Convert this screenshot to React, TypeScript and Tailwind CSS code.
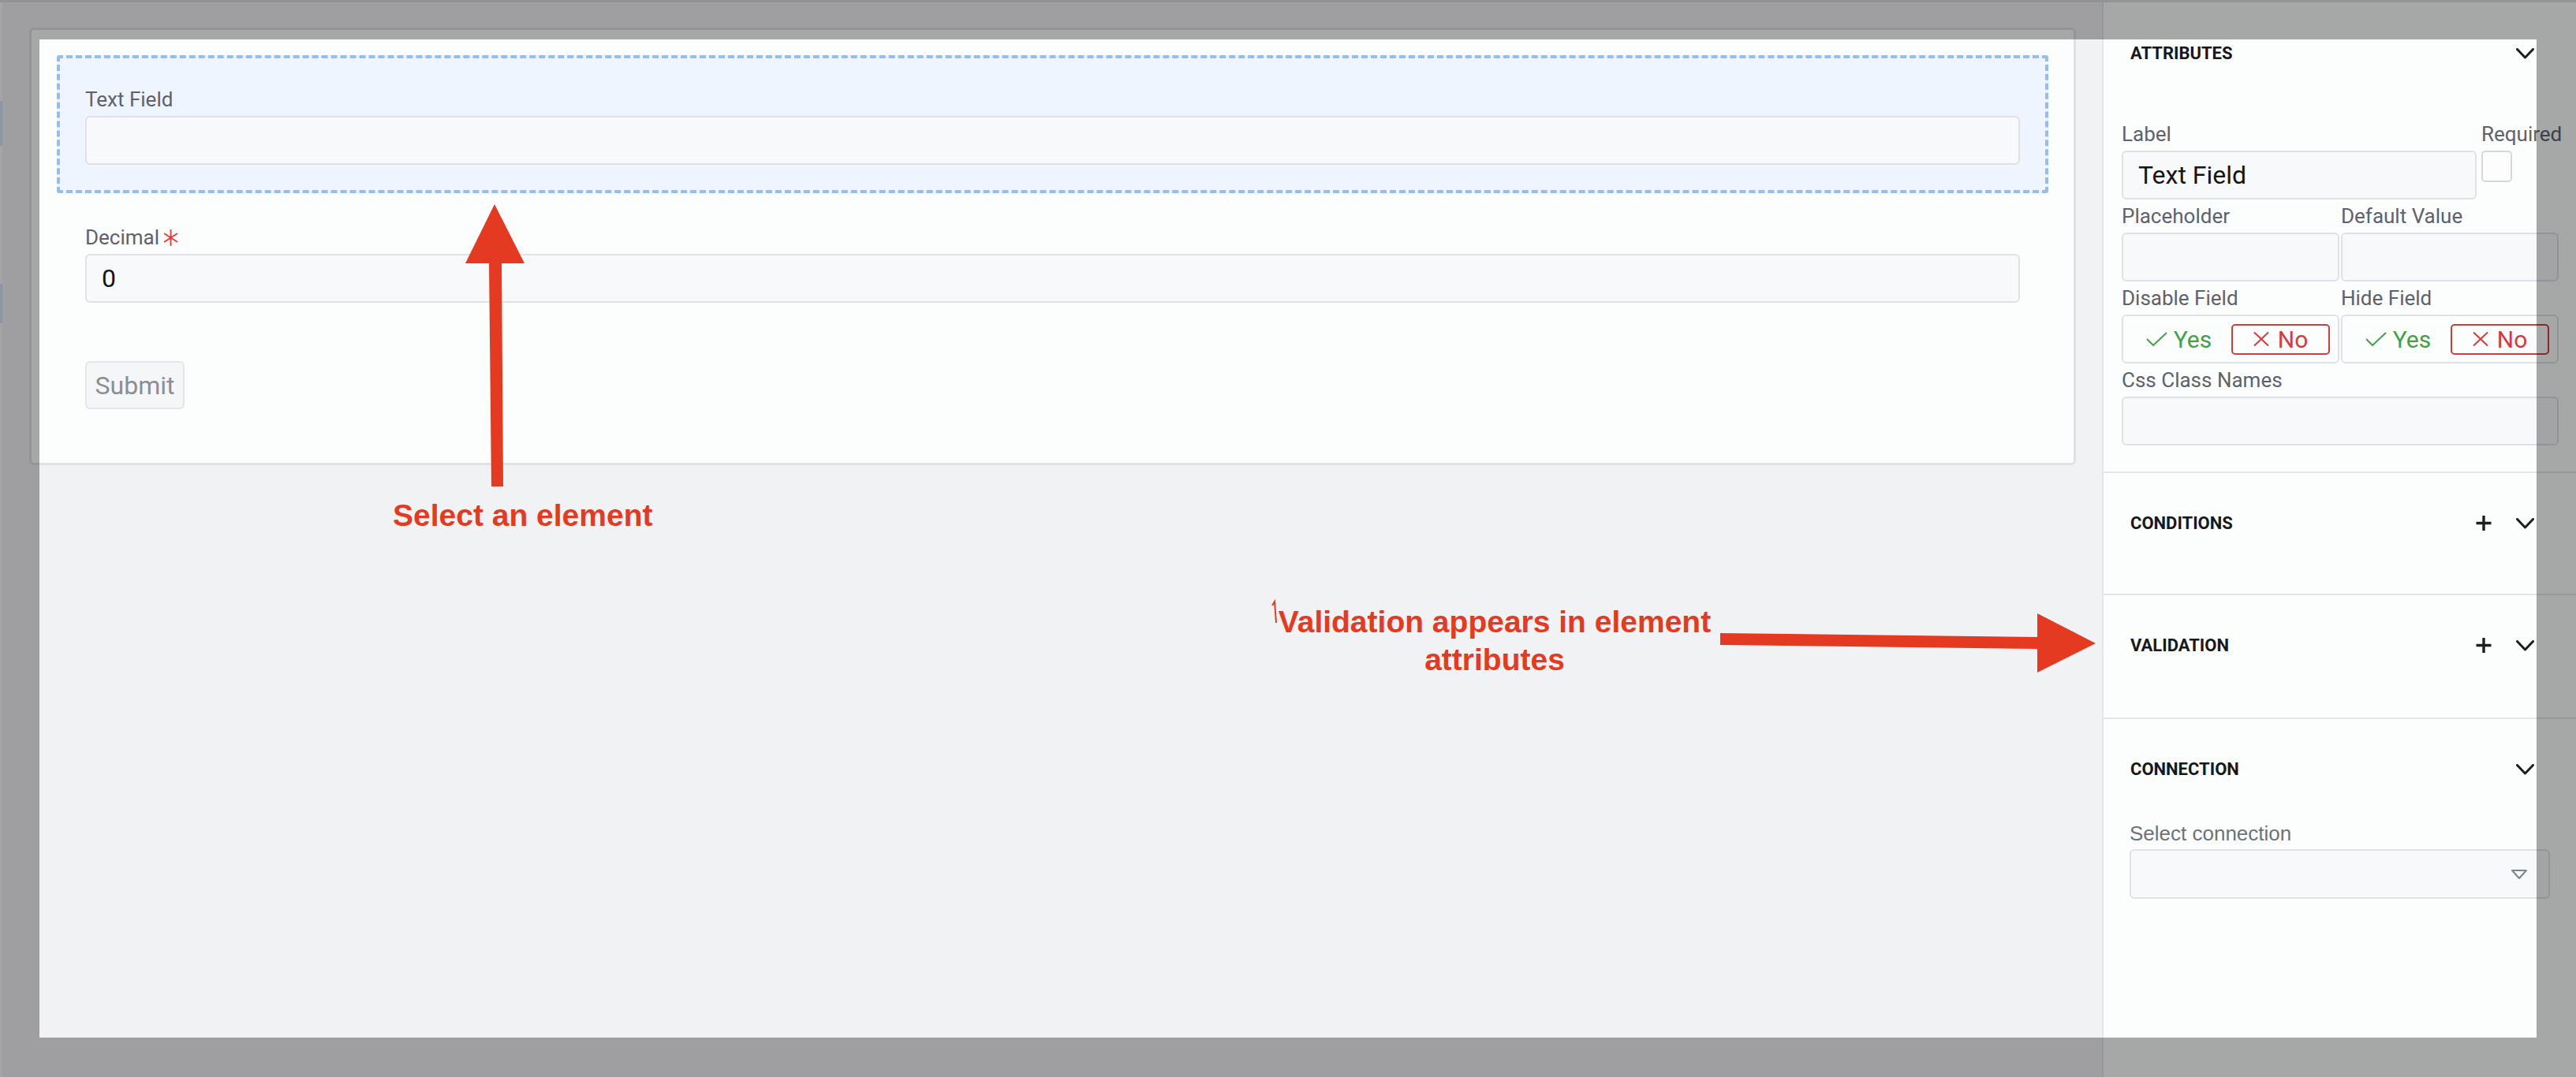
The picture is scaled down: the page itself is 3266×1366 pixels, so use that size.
import React from 'react';

function FieldLabel({ children }: { children: React.ReactNode }) {
  return <div className="whitespace-nowrap text-[26px] leading-[36px] text-[#5d626c]">{children}</div>;
}

function TextInput({ value = '' }: { value?: string }) {
  return (
    <input
      readOnly
      value={value}
      className="mt-[3px] block h-[62px] w-full rounded-[6px] border-2 border-[#dfe1e5] bg-[#f8f9fb] pl-[19px] text-[32px] text-[#141518] outline-none"
    />
  );
}

function Chevron() {
  return (
    <svg width="23" height="14" viewBox="0 0 23 14" fill="none">
      <path d="M1.5 1.5 L11.5 12 L21.5 1.5" stroke="#1c1e22" strokeWidth="3" strokeLinecap="round" strokeLinejoin="round" />
    </svg>
  );
}

function Plus() {
  return (
    <svg width="20" height="21" viewBox="0 0 20 21" fill="none">
      <path d="M10 1 V20 M0.5 10.5 H19.5" stroke="#1c1e22" strokeWidth="3.4" />
    </svg>
  );
}

function Check() {
  return (
    <svg width="27" height="18" viewBox="0 0 27 18" fill="none">
      <path d="M1 9 L9 17 L26 1" stroke="#43a047" strokeWidth="2" />
    </svg>
  );
}

function Cross() {
  return (
    <svg width="20" height="18" viewBox="0 0 20 18" fill="none">
      <path d="M1 0.5 L19 17.5 M19 0.5 L1 17.5" stroke="#d63b3b" strokeWidth="2" />
    </svg>
  );
}

function Asterisk() {
  return (
    <svg width="19" height="21" viewBox="0 0 19 21" fill="none">
      <path d="M9.5 0 V21 M1 5 L18 16 M18 5 L1 16" stroke="#e53935" strokeWidth="1.8" />
    </svg>
  );
}

function SectionHeader({ title, plus }: { title: string; plus?: boolean }) {
  return (
    <div className="flex h-[33px] items-center justify-between pl-[34px] pr-[53px]">
      <span className="text-[22px] font-bold leading-[33px] text-[#16181b]">{title}</span>
      <div className="flex items-center gap-[31px]">
        {plus && <Plus />}
        <Chevron />
      </div>
    </div>
  );
}

function YesNo() {
  return (
    <div className="mt-[3px] flex h-[62px] items-center gap-[4px] rounded-[6px] border-2 border-[#dfe1e5] bg-[#fcfdfd] px-[8px]">
      <div className="flex h-[39px] w-[125px] items-center justify-center gap-[8px] text-[30px] text-[#43a047]">
        <Check />
        <span>Yes</span>
      </div>
      <div className="flex h-[39px] w-[125px] items-center justify-center gap-[11px] rounded-[5px] border-2 border-[#d63b3b] text-[30px] text-[#d63b3b]">
        <Cross />
        <span>No</span>
      </div>
    </div>
  );
}

function Sidebar() {
  return (
    <aside className="w-[601px] shrink-0 border-l-2 border-[#e3e5e8] bg-[#fcfdfd]">
      <section className="pt-[48px]">
        <SectionHeader title="ATTRIBUTES" />
        <div className="pb-[33px] pl-[23px] pr-[22px] pt-[68px]">
          <div className="flex gap-[6px]">
            <div className="flex-1">
              <FieldLabel>Label</FieldLabel>
              <TextInput value="Text Field" />
            </div>
            <div className="w-[98px]">
              <FieldLabel>Required</FieldLabel>
              <div className="mt-[3px] h-[40px] w-[39px] rounded-[5px] border-2 border-[#d5d7db] bg-[#fdfdfd]" />
            </div>
          </div>
          <div className="mt-[3px] grid grid-cols-2 gap-x-[2px]">
            <div>
              <FieldLabel>Placeholder</FieldLabel>
              <TextInput />
            </div>
            <div>
              <FieldLabel>Default Value</FieldLabel>
              <TextInput />
            </div>
          </div>
          <div className="mt-[3px] grid grid-cols-2 gap-x-[2px]">
            <div>
              <FieldLabel>Disable Field</FieldLabel>
              <YesNo />
            </div>
            <div>
              <FieldLabel>Hide Field</FieldLabel>
              <YesNo />
            </div>
          </div>
          <div className="mt-[3px]">
            <FieldLabel>Css Class Names</FieldLabel>
            <TextInput />
          </div>
        </div>
      </section>

      <section className="border-t-2 border-[#e3e5e8] pb-[73px] pt-[47px]">
        <SectionHeader title="CONDITIONS" plus />
      </section>

      <section className="border-t-2 border-[#e3e5e8] pb-[75px] pt-[47px]">
        <SectionHeader title="VALIDATION" plus />
      </section>

      <section className="border-t-2 border-[#e3e5e8] pt-[47px]">
        <SectionHeader title="CONNECTION" />
        <div className="px-[33px] pt-[47px]">
          <div className="font-['Liberation_Sans',Arial,sans-serif] text-[26px] leading-[36px] text-[#6e727a]">
            Select connection
          </div>
          <div className="mt-[2px] flex h-[63px] items-center justify-end rounded-[6px] border-2 border-[#dfe1e5] bg-[#f8f9fb] pr-[27px]">
            <svg width="20" height="12" viewBox="0 0 20 12" fill="none">
              <path d="M1 1 H19 L10 11 Z" stroke="#7e828a" strokeWidth="2" strokeLinejoin="round" />
            </svg>
          </div>
        </div>
      </section>
    </aside>
  );
}

function Canvas() {
  return (
    <main className="flex-1 bg-[#f1f2f4] pl-[34px] pr-[33px] pt-[32px]">
      <div className="rounded-[6px] border-[3px] border-[#dfe1e4] bg-[#fcfdfd] p-[32px]">
        {/* selected element */}
        <div className="rounded-[3px] border-4 border-dashed border-[#96bdef] bg-[#eef5ff] px-[32px] pb-[32px] pt-[34px]">
          <FieldLabel>Text Field</FieldLabel>
          <TextInput />
        </div>
        <div className="border-[3px] border-transparent px-[33px] pb-[33px] pt-[35px]">
          <div className="flex items-center gap-[5px]">
            <FieldLabel>Decimal</FieldLabel>
            <Asterisk />
          </div>
          <TextInput value="0" />
        </div>
        <div className="border-[3px] border-transparent px-[33px] pb-[33px] pt-[35px]">
          <button className="h-[61px] w-[126px] rounded-[6px] border-2 border-[#e5e6ea] bg-[#f5f6f8] text-[32px] text-[#8b8e94]">
            Submit
          </button>
        </div>
      </div>
    </main>
  );
}

export default function App() {
  return (
    <div className="relative flex h-[1366px] w-[3266px] flex-col overflow-hidden bg-[#f1f2f4] font-['Roboto',sans-serif]">
      <div className="h-[3px] shrink-0 bg-[#dedfe1]" />
      <div className="flex flex-1">
        <div className="flex w-[3px] shrink-0 flex-col bg-[#fafafa]">
          <div className="h-[125px]" />
          <div className="h-[57px] bg-[#d4e3f9]" />
          <div className="h-[175px]" />
          <div className="h-[50px] bg-[#d4e3f9]" />
        </div>
        <Canvas />
        <Sidebar />
      </div>

      {/* tutorial spotlight */}
      <div className="pointer-events-none absolute left-[50px] top-[50px] h-[1266px] w-[3166px] shadow-[0_0_0_3000px_rgba(0,0,0,0.34)]" />

      <svg className="pointer-events-none absolute left-0 top-0" width="3266" height="1366" viewBox="0 0 3266 1366">
        <polygon points="627,259 590,334 665,334" fill="#e43a21" />
        <polygon points="620,333 636,333 638,617 623,617" fill="#e43a21" />
        <polygon points="2181,803 2584,808 2584,823 2181,818" fill="#e43a21" />
        <polygon points="2583,778 2657,816 2583,853" fill="#e43a21" />
        <path d="M1613 768 L1616 763 L1618 790" stroke="#e43a21" strokeWidth="2" fill="none" />
      </svg>

      <div className="absolute left-[498px] top-[631px] whitespace-nowrap font-['Liberation_Sans',Arial,sans-serif] text-[39px] font-bold leading-[45px] text-[#e43a21]">
        Select an element
      </div>
      <div className="absolute left-[1595px] top-[765px] w-[600px] text-center font-['Liberation_Sans',Arial,sans-serif] text-[39px] font-bold leading-[48px] text-[#e43a21]">
        Validation appears in element
        <br />
        attributes
      </div>
    </div>
  );
}
